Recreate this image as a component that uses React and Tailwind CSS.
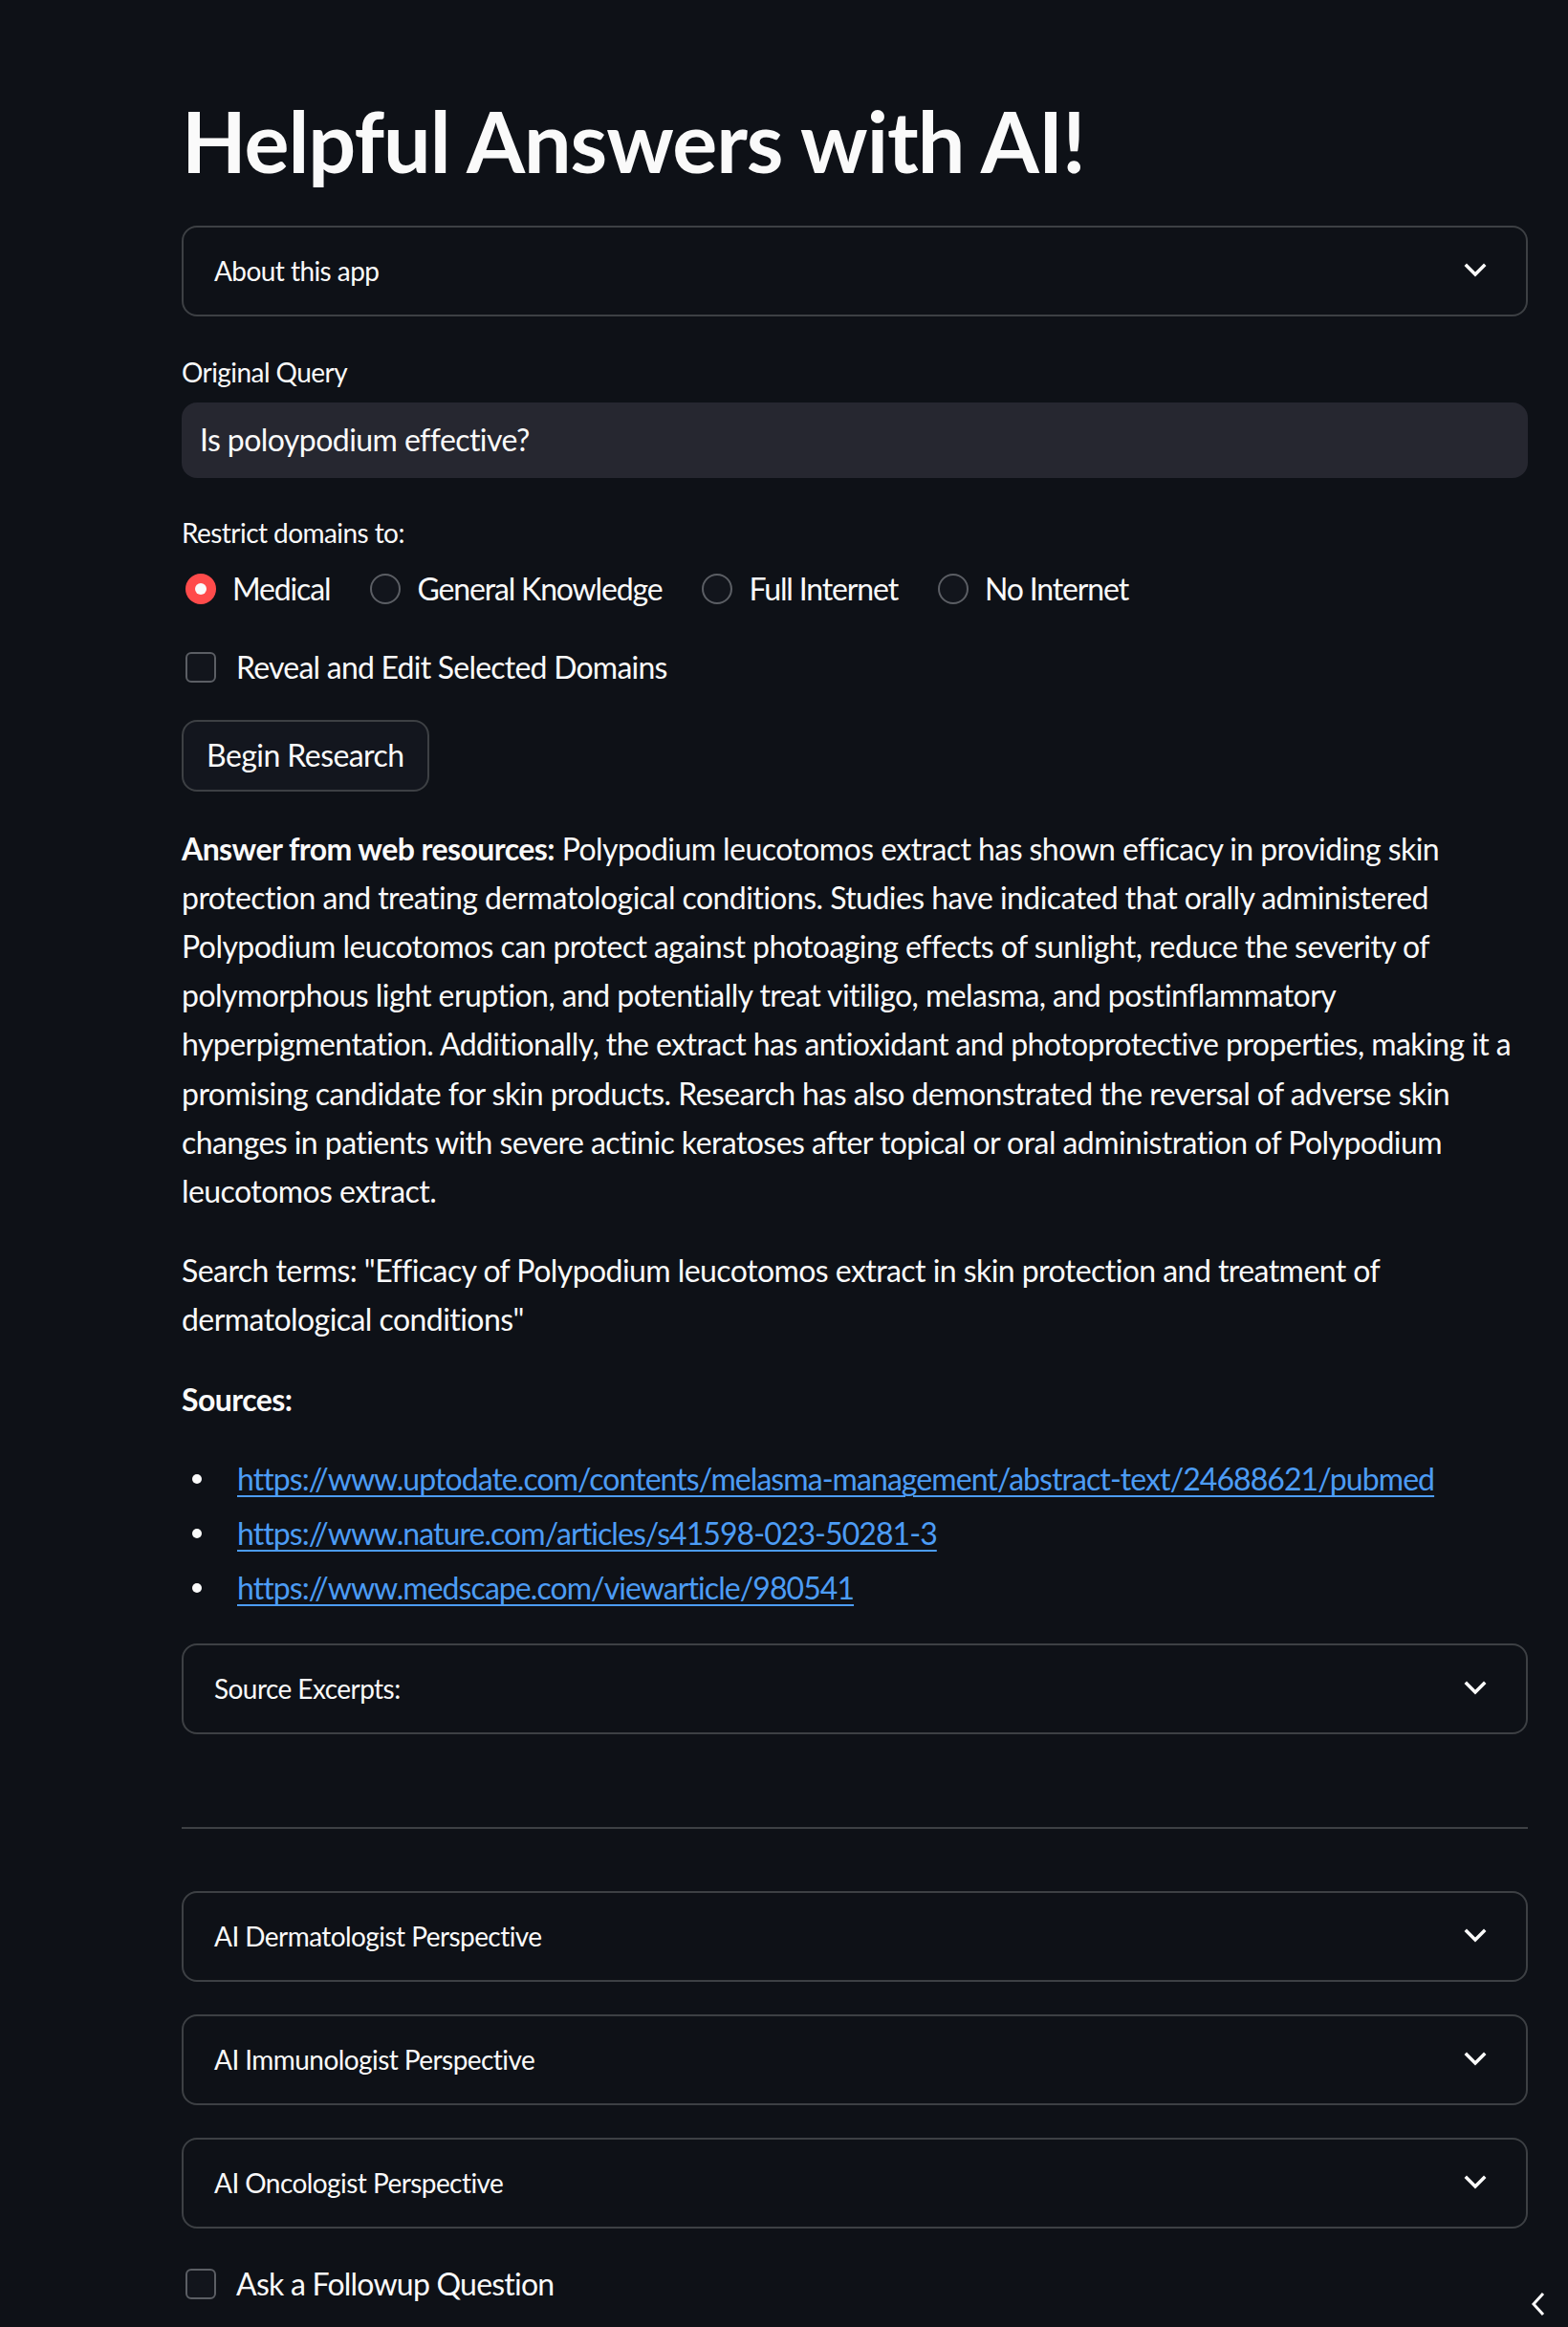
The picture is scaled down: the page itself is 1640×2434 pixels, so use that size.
import React from "react";

const answerLines = [
  "Polypodium leucotomos extract has shown efficacy in providing skin",
  "protection and treating dermatological conditions. Studies have indicated that orally administered",
  "Polypodium leucotomos can protect against photoaging effects of sunlight, reduce the severity of",
  "polymorphous light eruption, and potentially treat vitiligo, melasma, and postinflammatory",
  "hyperpigmentation. Additionally, the extract has antioxidant and photoprotective properties, making it a",
  "promising candidate for skin products. Research has also demonstrated the reversal of adverse skin",
  "changes in patients with severe actinic keratoses after topical or oral administration of Polypodium",
  "leucotomos extract.",
];

const sources = [
  "https://www.uptodate.com/contents/melasma-management/abstract-text/24688621/pubmed",
  "https://www.nature.com/articles/s41598-023-50281-3",
  "https://www.medscape.com/viewarticle/980541",
];

const domains = [
  { label: "Medical", checked: true },
  { label: "General Knowledge" },
  { label: "Full Internet" },
  { label: "No Internet" },
];

const ChevronDown = () => (
  <svg width="24" height="16" viewBox="0 0 24 16" fill="none" className="shrink-0">
    <polyline
      points="3,3 12,12 21,3"
      stroke="#fafafa"
      strokeWidth="3.5"
      strokeLinecap="square"
    />
  </svg>
);

const Expander = ({ label, className = "" }) => (
  <div
    className={`flex h-[95px] items-center justify-between rounded-2xl border-2 border-[#3d4044] pl-8 pr-[41px] ${className}`}
  >
    <span className="text-[28px] leading-[44px]">{label}</span>
    <ChevronDown />
  </div>
);

const Checkbox = ({ label, className = "" }) => (
  <div className={`flex h-10 items-center gap-[21px] pl-1 ${className}`}>
    <span className="h-8 w-8 shrink-0 rounded-md border-2 border-[#5b5e64] bg-[#12151c]" />
    <span className="text-[32px] tracking-[-0.77px]">{label}</span>
  </div>
);

const Radio = ({ label, checked }) => (
  <div className="mr-[42px] flex items-center gap-[17px]">
    {checked ? (
      <span className="flex h-8 w-8 items-center justify-center rounded-full bg-[#ff4b4b]">
        <span className="h-3 w-3 rounded-full bg-[#fafafa]" />
      </span>
    ) : (
      <span className="h-8 w-8 rounded-full border-2 border-[#5b5e64] bg-[#12151c]" />
    )}
    <span className="text-[32px] tracking-[-1.15px]">{label}</span>
  </div>
);

export default function App() {
  return (
    <div className="relative min-h-[2434px] w-full bg-[#0e1117] font-['Lato',sans-serif] tracking-[-0.56px] text-[#fafafa]">
      <main className="ml-[190px] w-[1408px] pt-[95px]">
        {/* Title */}
        <h1 className="text-[88px] font-bold leading-[1.2] tracking-[-1px]">
          Helpful Answers with AI!
        </h1>

        <Expander label="About this app" className="mt-[35px]" />

        {/* Query */}
        <div className="mt-[36px] flex h-[44px] items-center text-[28px]">
          Original Query
        </div>
        <div className="mt-[10px] flex h-[79px] items-center rounded-2xl bg-[#262730] pl-[19px] text-[32px]">
          Is poloypodium effective?
        </div>

        {/* Domains */}
        <div className="mt-[35px] flex h-[44px] items-center text-[28px]">
          Restrict domains to:
        </div>
        <div className="mt-[17px] flex h-10 items-center pl-1">
          {domains.map((d) => (
            <Radio key={d.label} label={d.label} checked={d.checked} />
          ))}
        </div>

        <Checkbox label="Reveal and Edit Selected Domains" className="mt-[42px]" />

        <button className="mt-[35px] h-[75px] rounded-2xl border-2 border-[#3d4044] bg-[#13161e] px-6 text-[32px] text-[#fafafa]">
          Begin Research
        </button>

        {/* Answer */}
        <p className="mt-[34px] whitespace-nowrap text-[32px] leading-[51.2px]">
          <b className="font-bold">Answer from web resources:</b>{" "}
          {answerLines.map((line, i) => (
            <React.Fragment key={i}>
              {line}
              {i < answerLines.length - 1 && <br />}
            </React.Fragment>
          ))}
        </p>

        <p className="mt-[32px] text-[32px] leading-[51.2px]">
          Search terms: "Efficacy of Polypodium leucotomos extract in skin protection and treatment of
          <br />
          dermatological conditions"
        </p>

        <p className="mt-[32px] text-[32px] font-bold leading-[51.2px]">Sources:</p>

        <ul className="mt-[33px] flex flex-col gap-[6px]">
          {sources.map((url) => (
            <li key={url} className="flex h-[51px] items-center text-[32px]">
              <span className="ml-[11px] mr-[37px] h-[10px] w-[10px] shrink-0 rounded-full bg-[#fafafa]" />
              <a
                href={url}
                className="tracking-[-0.93px] text-[#4c9cf5] underline decoration-2 underline-offset-[5px]"
              >
                {url}
              </a>
            </li>
          ))}
        </ul>

        <Expander label="Source Excerpts:" className="mt-[32px]" />

        <hr className="mt-[97px] border-t-2 border-[#3d4044]" />

        <Expander label="AI Dermatologist Perspective" className="mt-[65px]" />
        <Expander label="AI Immunologist Perspective" className="mt-[34px]" />
        <Expander label="AI Oncologist Perspective" className="mt-[34px]" />

        <Checkbox label="Ask a Followup Question" className="mt-[38px]" />
      </main>

      {/* Sidebar expand arrow */}
      <svg
        width="18"
        height="28"
        viewBox="0 0 18 28"
        fill="none"
        className="absolute left-[1600px] top-[2396px]"
      >
        <polyline points="14,3 4,14 14,25" stroke="#fafafa" strokeWidth="3" />
      </svg>
    </div>
  );
}
